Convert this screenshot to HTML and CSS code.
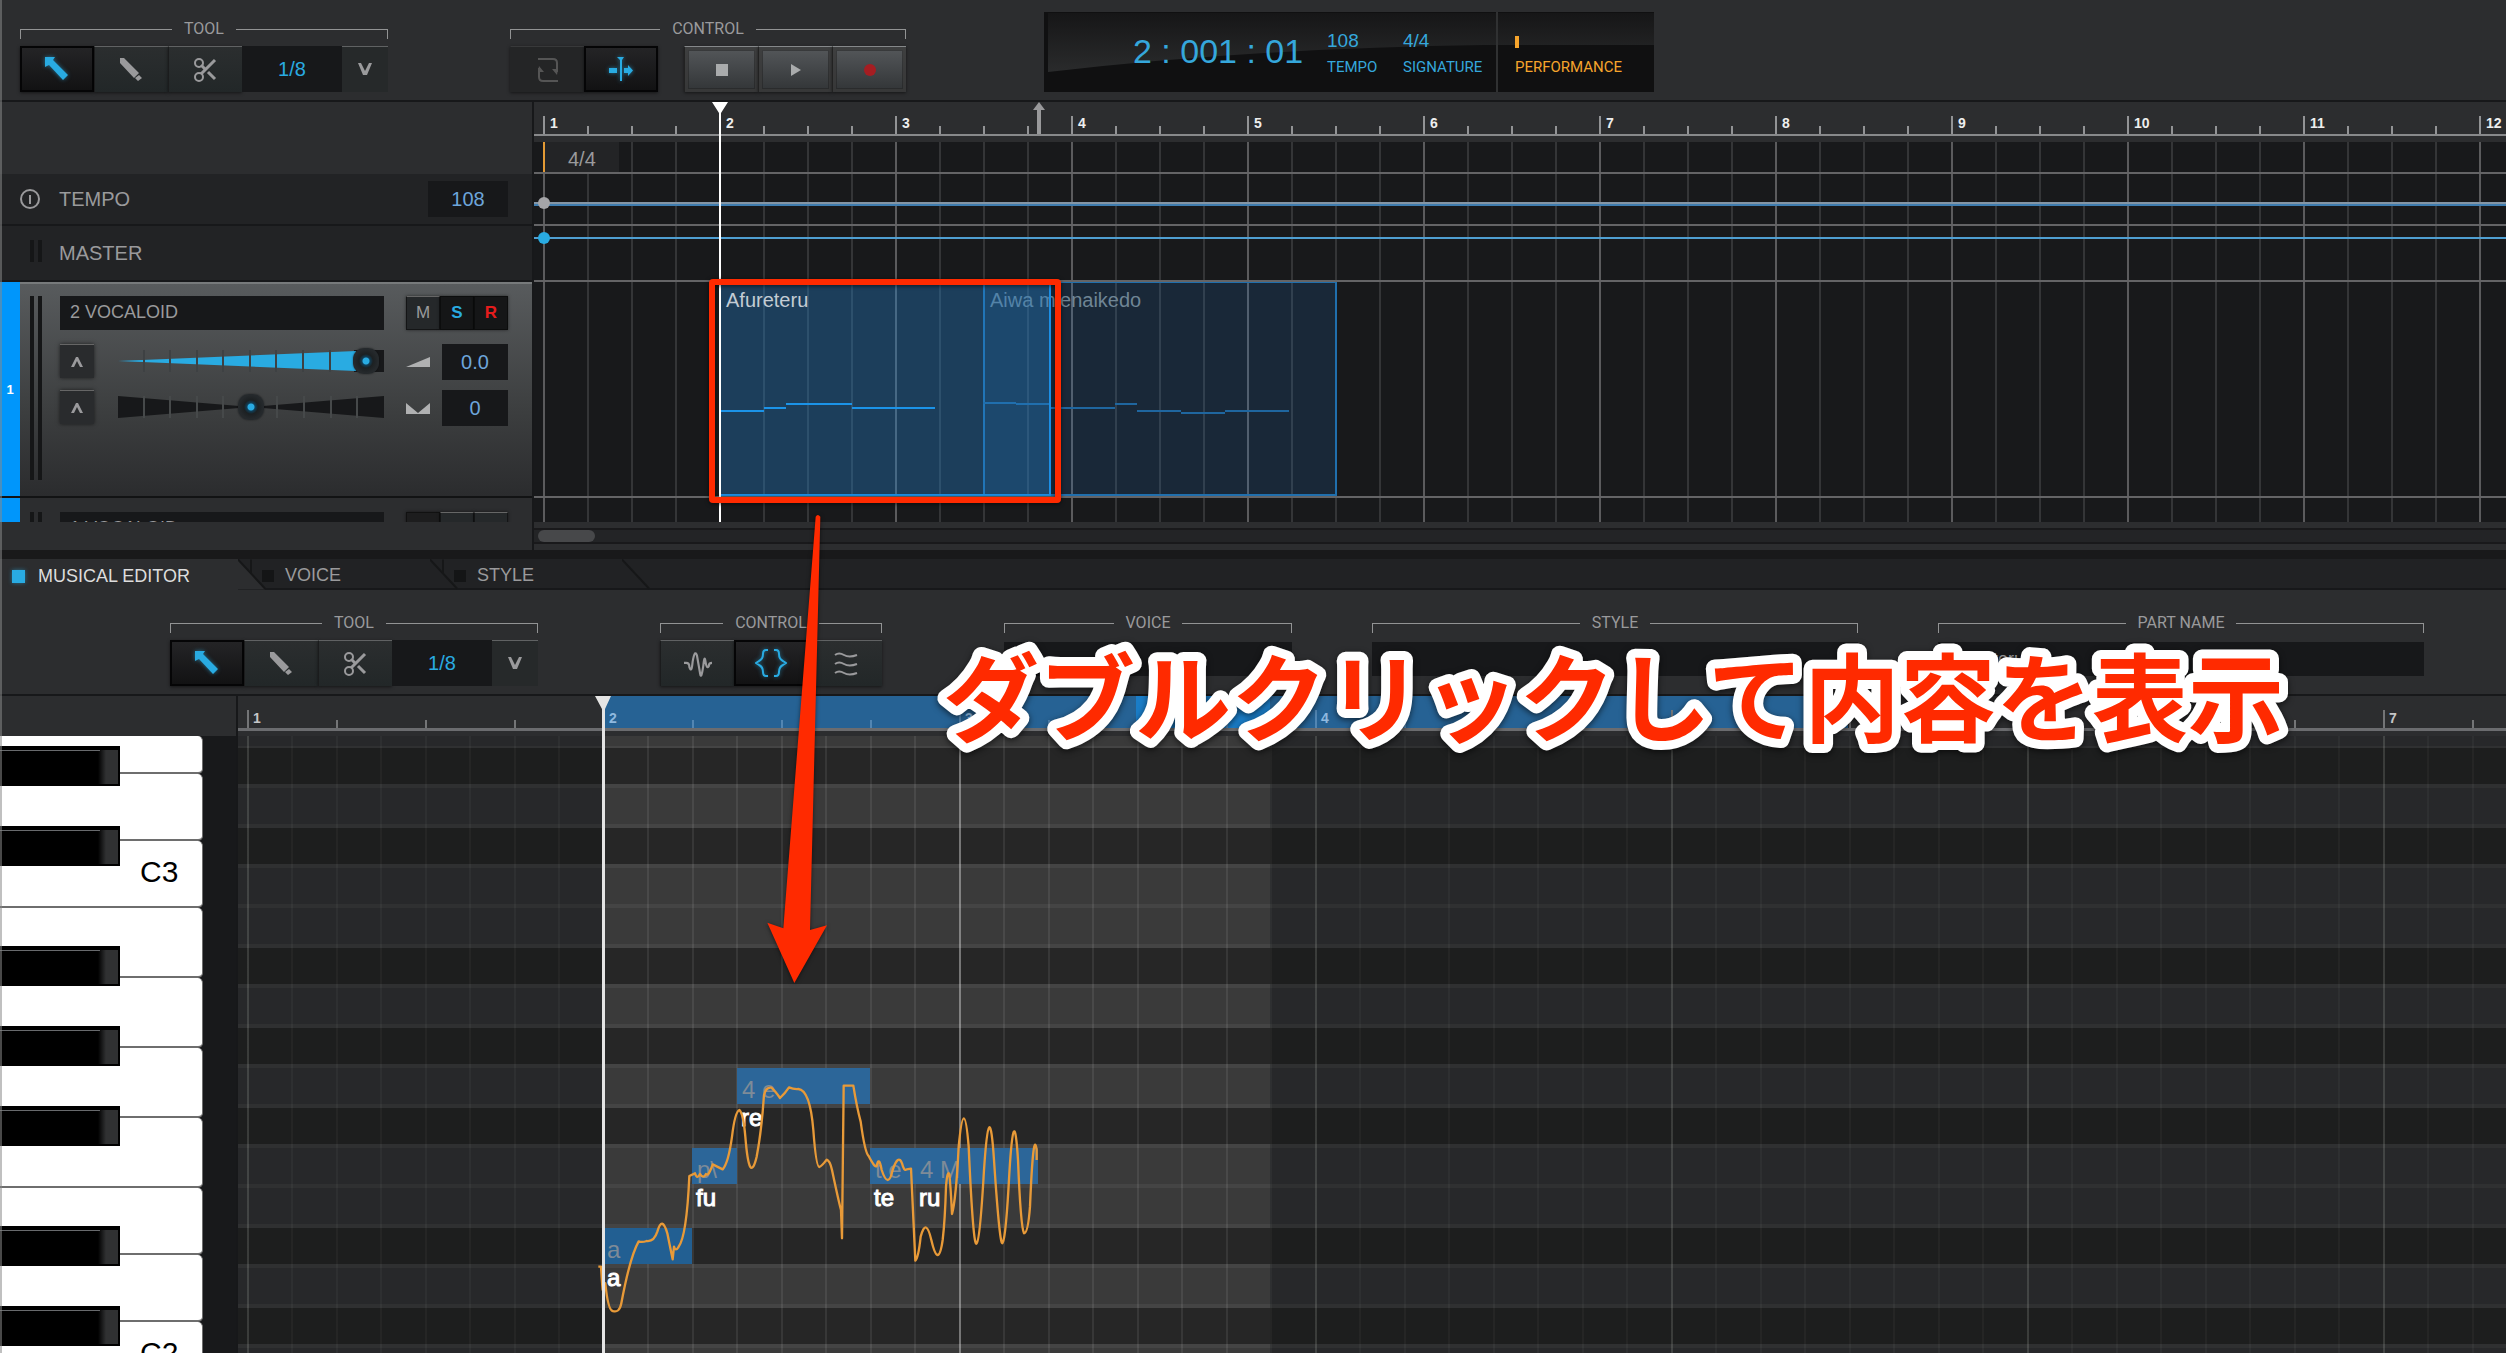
FILE: index.html
```html
<!DOCTYPE html>
<html lang="ja">
<head>
<meta charset="utf-8">
<title>VOCALOID Editor</title>
<link rel="stylesheet" href="styles.css">
</head>
<body>
<svg class="defs" aria-hidden="true">
  <linearGradient id="glare" x1="0" y1="0" x2="0" y2="1"><stop offset="0" stop-color="#161617"/><stop offset="1" stop-color="#2a2b2c"/></linearGradient>
  <symbol id="i-select" viewBox="0 0 24 24"><polygon points="0,0 10,0 8,3 23,18 18,23 4,8 0,10" fill="currentColor"/></symbol>
  <symbol id="i-pencil" viewBox="0 0 24 24"><path d="M0 0H4L19 15 14 20 0 5ZM19 17 22 20 18 23 15 20Z" fill="currentColor"/></symbol>
  <symbol id="i-cut" viewBox="0 0 24 24"><g fill="none" stroke="currentColor" stroke-width="2"><circle cx="5" cy="5" r="4"/><circle cx="5" cy="19" r="4"/><path d="M7 7 11 11M14 14 21 21" stroke-width="3"/><path d="M7 16 21 2" stroke-width="3"/></g></symbol>
  <symbol id="i-loop" viewBox="0 0 24 24"><path d="M2 1H17Q21 1 21 5V14M22 23H7Q3 23 3 19V10" fill="none" stroke="currentColor" stroke-width="2"/><path d="M21 17 16 11H22ZM3 8 8 14H2Z" fill="currentColor"/></symbol>
  <symbol id="i-follow" viewBox="0 0 24 24"><path d="M0 11H8V16H0ZM15 11H19V8L24 13.5 19 19V16H15ZM8 0H15L13 3V24H11V3Z" fill="currentColor"/></symbol>
  <symbol id="i-wave" viewBox="0 0 28 26"><path d="M1 12H3Q6 12 6 16Q8 22 9 11Q11 -1 13 5L16 22Q17 28 19 14Q20 4 21 11Q22 18 24 15Q24 12 27 12" fill="none" stroke="currentColor" stroke-width="2"/></symbol>
  <symbol id="i-brace" viewBox="0 0 32 28"><path d="M13 1H11Q8 1 8 5Q8 10 4 12L1 14 4 16Q8 18 8 23Q8 27 11 27H13M19 1H21Q24 1 24 5Q24 10 28 12L31 14 28 16Q24 18 24 23Q24 27 21 27H19" fill="none" stroke="currentColor" stroke-width="2"/></symbol>
  <symbol id="i-tilde" viewBox="0 0 24 24"><path d="M1 3Q5 0 10 3T23 3M1 12Q5 9 10 12T23 12M1 21Q5 18 10 21T23 21" fill="none" stroke="currentColor" stroke-width="2"/></symbol>
  <symbol id="i-down" viewBox="0 0 14 12"><path d="M0 0H3L7 8 11 0H14L9 12H5Z" fill="currentColor"/></symbol>
  <symbol id="i-up" viewBox="0 0 12 10"><path d="M0 10 5 0H7L12 10H9L6 4 3 10Z" fill="currentColor"/></symbol>
</svg>

<div class="app">
  <header class="transport">
    <div class="group">
      <div class="bracket"><span>TOOL</span></div>
      <div class="buttons">
        <button class="btn on" aria-label="Select"><svg class="icon"><use href="#i-select"/></svg></button>
        <button class="btn" aria-label="Pencil"><svg class="icon"><use href="#i-pencil"/></svg></button>
        <button class="btn" aria-label="Scissors"><svg class="icon"><use href="#i-cut"/></svg></button>
        <div class="quantize"><select aria-label="Quantize"><option>1/8</option></select><svg class="chev"><use href="#i-down"/></svg></div>
      </div>
    </div>
    <div class="group">
      <div class="bracket"><span>CONTROL</span></div>
      <div class="buttons">
        <button class="btn off" aria-label="Loop"><svg class="icon"><use href="#i-loop"/></svg></button>
        <button class="btn on" aria-label="Follow playhead"><svg class="icon"><use href="#i-follow"/></svg></button>
        <div class="deck">
          <button class="btn raised" aria-label="Stop"><i class="stop"></i></button>
          <button class="btn raised" aria-label="Play"><i class="play"></i></button>
          <button class="btn raised" aria-label="Record"><i class="rec"></i></button>
        </div>
      </div>
    </div>
    <div class="lcd">
      <svg class="glare" viewBox="0 0 610 80" preserveAspectRatio="none"><path d="M4 1H610V33H440Q210 36 4 60Z" fill="url(#glare)"/></svg>
      <div class="lcd-main">
        <output class="time">2 : 001 : 01</output>
        <dl><dd>108</dd><dt>TEMPO</dt></dl>
        <dl><dd>4/4</dd><dt>SIGNATURE</dt></dl>
      </div>
      <div class="perf"><i></i><span>PERFORMANCE</span></div>
    </div>
  </header>

  <main class="arrange">
    <div class="heads">
      <div class="head-top"></div>
      <div class="head tempo">
        <svg class="clock" viewBox="0 0 22 22"><circle cx="11" cy="11" r="9"/><path d="M11 7V16"/></svg>
        <label for="tempo">TEMPO</label><input id="tempo" class="value" value="108">
      </div>
      <div class="head master"><i class="meter"></i><span>MASTER</span></div>
      <div class="track">
        <div class="strip">1</div>
        <i class="meter"></i>
        <div class="controls">
          <input class="name" aria-label="Track name" value="2 VOCALOID">
          <div class="msr"><button>M</button><button class="solo">S</button><button class="arm">R</button></div>
          <button class="expand" aria-label="Volume automation"><svg><use href="#i-up"/></svg></button>
          <div class="fader">
            <svg viewBox="0 0 266 22"><path d="M236 0H266V22H236Z" fill="#17181a"/><path d="M0 11 238 1V21Z" fill="#29abe2"/><path d="M26 0V22M52 0V22M79 0V22M105 0V22M132 0V22M158 0V22M185 0V22M212 0V22" stroke="#3e4143" stroke-width="2"/></svg>
            <input type="range" aria-label="Volume" value="98">
          </div>
          <svg class="mark" viewBox="0 0 24 12"><path d="M0 11 24 1V11Z"/></svg>
          <input class="value" aria-label="Volume value" value="0.0">
          <button class="expand" aria-label="Pan automation"><svg><use href="#i-up"/></svg></button>
          <div class="fader">
            <svg viewBox="0 0 266 22"><path d="M0 0 133 11 266 0V22L133 11 0 22Z" fill="#17181a"/><path d="M26 0V22M52 0V22M79 0V22M105 0V22M159 0V22M186 0V22M213 0V22M239 0V22" stroke="#46494a" stroke-width="2"/></svg>
            <input type="range" aria-label="Pan" value="50">
          </div>
          <svg class="mark" viewBox="0 0 24 12"><path d="M0 1 12 11 24 1V12H0Z"/></svg>
          <input class="value" aria-label="Pan value" value="0">
        </div>
      </div>
      <div class="track cut">
        <div class="strip"></div>
        <i class="meter"></i>
        <div class="controls">
          <input class="name" aria-label="Track name" value="1 VOCALOID">
          <div class="msr"><button class="pressed">M</button><button>S</button><button>R</button></div>
        </div>
      </div>
      <div class="head-foot"></div>
    </div>

    <div class="lanes">
      <ol class="ruler"><li>1</li><li>2</li><li>3</li><li>4</li><li>5</li><li>6</li><li>7</li><li>8</li><li>9</li><li>10</li><li>11</li><li>12</li></ol>
      <div class="gutter"></div>
      <div class="grid">
        <div class="lane sig"><span>4/4</span></div>
        <div class="lane l-tempo"><i class="curve wide"></i><i class="dot grey"></i></div>
        <div class="lane l-master"><i class="curve"></i><i class="dot"></i></div>
        <div class="lane l-track">
          <div class="part second"><span>Aiwa mienaikedo</span>
            <svg viewBox="0 0 354 214"><path d="M0 120H33M33 121H67M67 125H132M132 121H154M154 128H198M198 130H242M242 128H306"/></svg></div>
          <div class="part first"><span>Afureteru</span>
            <svg viewBox="0 0 331 214"><path d="M0 128H44M44 125H66M66 121H132M132 125H215"/></svg></div>
        </div>
        <div class="lane l-next"></div>
      </div>
      <div class="scroll"><i></i></div>
      <svg class="marker" viewBox="0 0 12 32"><path d="M6 0 12 8H8V32H4V8H0Z"/></svg>
      <svg class="playhead" viewBox="0 0 16 420"><path d="M0 0H16L9 11V420H7V11Z"/></svg>
    </div>
  </main>

  <nav class="tabs">
    <button class="tab active"><i></i>MUSICAL EDITOR</button><svg class="edge" viewBox="0 0 28 30"><path class="fill" d="M0 0 27 30H0Z"/><path d="M0 0 27 29M13 0V14"/></svg>
    <button class="tab"><i></i>VOICE</button><svg class="edge" viewBox="0 0 28 30"><path d="M0 0 27 29M13 0V14"/></svg>
    <button class="tab"><i></i>STYLE</button><svg class="edge" viewBox="0 0 28 30"><path d="M0 0 27 29"/></svg>
  </nav>

  <section class="editor-bar">
    <div class="group">
      <div class="bracket"><span>TOOL</span></div>
      <div class="buttons">
        <button class="btn on" aria-label="Select"><svg class="icon"><use href="#i-select"/></svg></button>
        <button class="btn" aria-label="Pencil"><svg class="icon"><use href="#i-pencil"/></svg></button>
        <button class="btn" aria-label="Scissors"><svg class="icon"><use href="#i-cut"/></svg></button>
        <div class="quantize"><select aria-label="Quantize"><option>1/8</option></select><svg class="chev"><use href="#i-down"/></svg></div>
      </div>
    </div>
    <div class="group">
      <div class="bracket"><span>CONTROL</span></div>
      <div class="buttons">
        <button class="btn" aria-label="Pitch"><svg class="icon big"><use href="#i-wave"/></svg></button>
        <button class="btn on" aria-label="Notes"><svg class="icon big"><use href="#i-brace"/></svg></button>
        <button class="btn" aria-label="Vibrato"><svg class="icon"><use href="#i-tilde"/></svg></button>
      </div>
    </div>
    <div class="group voice"><div class="bracket"><label for="voice">VOICE</label></div><input id="voice" class="field"></div>
    <div class="group style"><div class="bracket"><label for="style">STYLE</label></div><input id="style" class="field"></div>
    <div class="group part-name"><div class="bracket"><label for="part">PART NAME</label></div><input id="part" class="field" value="Afureteru"></div>
  </section>

  <section class="editor">
    <div class="keys-side">
      <div class="keys-top"></div>
      <div class="piano">
        <ul class="white"><li></li><li class="s"></li><li class="s">C3</li><li></li><li></li><li></li><li></li><li class="s"></li><li class="s"></li><li class="s">C2</li></ul>
        <ul class="black"><li></li><li class="wide"></li><li></li><li></li><li class="wide"></li><li></li><li></li></ul>
      </div>
    </div>
    <div class="roll">
      <ol class="ruler"><li>1</li><li class="lit">2</li><li class="lit">3</li><li class="lit">4</li><li>5</li><li>6</li><li>7</li></ol>
      <div class="gutter"></div>
      <div class="canvas">
        <div class="region">
          <div class="note n1"><b>a</b><span>a</span></div>
          <div class="note n2"><b>p\</b><span>fu</span></div>
          <div class="note n3"><b>4 e</b><span>re</span></div>
          <div class="note n4"><b>t e</b><span>te</span></div>
          <div class="note n5"><b>4 M</b><span>ru</span></div>
        </div>
        <svg class="pitch" viewBox="0 0 1500 999"><path d="M55 740H63Q66 790 68 810Q70 785 76 790Q84 870 98 873Q118 880 124 850Q150 710 176 664Q186 668 200 663Q222 666 232 635Q246 585 262 640Q272 690 278 718L282 680Q286 695 295 682Q320 650 328 468L345 460Q352 480 360 462Q370 478 378 462Q385 472 398 433Q412 440 428 448Q445 430 456 350Q465 275 478 270Q490 280 496 350Q508 500 530 410Q545 330 552 225Q558 200 574 203Q585 212 600 234Q615 220 627 202Q640 208 655 207Q690 210 700 330Q708 440 718 441Q726 438 740 419Q750 422 756 450Q775 540 783 570L786 655L791 197H820Q830 260 842 305Q855 400 866 408Q885 445 890 438Q897 405 905 450Q925 510 938 450Q955 400 966 430Q972 455 980 448L993 446L1006 722Q1015 715 1022 650Q1038 590 1054 660Q1075 750 1088 660Q1095 600 1098 500Q1102 450 1108 462Q1112 500 1116 582Q1128 540 1136 380Q1152 210 1166 380Q1180 690 1190 670Q1200 660 1212 450Q1228 210 1242 420Q1260 690 1268 668Q1278 650 1288 460Q1302 230 1314 420Q1322 620 1332 640Q1344 640 1350 560Q1360 320 1370 390V420"/></svg>
      </div>
      <svg class="playhead" viewBox="0 0 16 660" preserveAspectRatio="xMidYMin slice"><path d="M0 0H16L10 13V660H7V13Z"/></svg>
    </div>
  </section>
</div>

<div class="frame"></div>
<svg class="arrow" viewBox="0 0 1560 1500"><path d="M347 50Q353 40 361 50L330 1290 381 1276 283 1449 202 1268 250 1285Z"/></svg>
<svg class="caption" viewBox="0 0 1400 150"><text x="33" y="104">ダブルクリックして内容を表示</text></svg>
</body>
</html>
```
FILE: styles.css
```css
* { box-sizing: border-box; margin: 0; padding: 0; }
:root {
  --panel: #2c2d2f;
  --dark: #17181a;
  --row: #222325;
  --blue: #29abe2;
  --grey: #9a9a9c;
  --label: Roboto, "Liberation Sans", sans-serif;
}
body {
  position: relative;
  background: var(--panel);
  color: var(--grey);
  font-family: "Liberation Sans", Arial, "Noto Sans CJK JP", sans-serif;
  overflow: hidden;
}
button, input, select { font: inherit; color: inherit; border: 0; border-radius: 0; }
ul, ol { list-style: none; }
.defs { position: absolute; width: 0; height: 0; }
.app { display: flex; flex-direction: column; height: 100vh; overflow: hidden; }
.app::after { content: ""; position: absolute; inset: 0 auto 0 0; width: 2px; background: #8888; }

/* toolbars */
.transport { display: flex; align-items: flex-start; height: 102px; flex: none; padding: 21px 0 0 20px; border-bottom: 2px solid var(--dark); }
.transport .group + .group { margin-left: 122px; }
.bracket { display: flex; align-items: flex-end; gap: 12px; height: 18px; margin-bottom: 7px; font: 16px/20px var(--label); }
.bracket::before, .bracket::after { content: ""; flex: 1; height: 9px; border: 0 solid #929394; border-top-width: 1px; }
.bracket::before { border-left-width: 1px; }
.bracket::after { border-right-width: 1px; }
.buttons { display: flex; height: 46px; }
.btn { display: grid; place-items: center; width: 74px; height: 46px; background: linear-gradient(#2b2e2f, #222728); border-top: 1px solid #606263; border-left: 1px solid #1b1c1d; box-shadow: 0 1px 3px #0008; color: var(--grey); }
.btn.on { background: linear-gradient(#242426, #121213); border: 2px solid #050506; color: var(--blue); }
.btn.off { background: #242526; border-color: #38393a #242526; color: #555; }
.btn.on .icon { filter: drop-shadow(0 0 2px #29abe299); }
.icon { width: 24px; height: 24px; }
.icon.big { width: 32px; height: 28px; }
.quantize { position: relative; width: 146px; }
.quantize select { appearance: none; width: 100%; height: 46px; padding-right: 46px; text-align: center; text-align-last: center; font-size: 20px; color: var(--blue); background: linear-gradient(90deg, var(--dark) 100px, #26292a 100px); }
.quantize::after { content: ""; position: absolute; right: 0; top: 0; width: 46px; height: 1px; background: #606263; }
.chev { position: absolute; right: 16px; top: 17px; width: 14px; height: 12px; pointer-events: none; }
.deck { display: flex; margin-left: 26px; }
.raised { background: linear-gradient(#55585b, #313436); border-color: #85888a #222; box-shadow: 0 1px 3px #0008, inset 0 0 0 3px #4448, inset 0 0 0 4px #2228; }
.stop { width: 12px; height: 12px; background: #a9abac; }
.play { border: solid transparent; border-width: 6px 0 6px 10px; border-left-color: #a9abac; }
.rec { width: 12px; height: 12px; border-radius: 50%; background: #a51d22; }

.lcd { position: relative; display: flex; width: 610px; height: 80px; margin: -9px 0 0 138px; background: #101011; color: #35a7dc; }
.lcd-main { position: relative; display: flex; width: 452px; padding-left: 89px; }
.glare { position: absolute; left: 0; top: 0; width: 610px; height: 80px; }
.time { width: 194px; font-size: 34px; line-height: 78px; white-space: pre; }
.lcd dl { display: flex; flex-direction: column; gap: 3px; width: 76px; padding-top: 18px; font: 15px/24px var(--label); }
.lcd dd { font: 19px/22px "Liberation Sans", sans-serif; }
.perf { position: relative; padding: 24px 0 0 17px; border-left: 2px solid #303132; color: #f6a42c; font: 15px/24px var(--label); }
.perf i { display: block; width: 4px; height: 12px; margin-bottom: 7px; background: #f6a42c; }

/* arrangement */
.arrange { display: grid; grid-template-columns: 532px 1fr; flex: none; background: var(--panel); }
.head-top { height: 72px; }
.head { display: flex; align-items: center; background: var(--row); border-bottom: 2px solid var(--dark); font-size: 20px; }
.head.tempo { height: 52px; padding: 0 24px 0 19px; }
.clock { width: 22px; height: 22px; margin-right: 18px; fill: none; stroke: var(--grey); stroke-width: 2; }
.tempo label { flex: 1; }
.value { height: 36px; width: 66px; text-align: center; font-size: 20px; background: var(--dark); color: #6da5da; }
.tempo .value { width: 80px; }
.head.master { height: 56px; padding-left: 30px; }
.meter { flex: none; width: 12px; border: solid #151617; border-width: 0 4px; }
.master .meter { height: 22px; margin: 0 17px 4px 0; }
.track { display: flex; height: 216px; border-bottom: 2px solid #121314; background: linear-gradient(#777a7b 2px, #585b5d 2px, #3c3e3f 130px, #2b2c2e 100%); }
.strip { display: grid; place-items: center; width: 20px; background: #0096fb; color: #fff; font-size: 13px; font-weight: bold; }
.track .meter { margin: 14px 18px 16px 10px; }
.controls { display: grid; grid-template-columns: 58px 266px 22px 36px 66px; grid-template-rows: 48px 46px 36px; padding-top: 14px; align-content: start; align-items: start; }
.name { grid-column: 1 / 3; width: 324px; height: 34px; padding: 0 10px 2px; background: var(--dark); font-size: 18px; }
.msr { grid-column: 4 / 6; display: flex; height: 34px; }
.msr button { width: 34px; background: #25282a; border: 1px solid #141516; border-top-color: #666; font-size: 17px; box-shadow: 0 0 3px #0008; }
.msr .solo, .msr .arm { background: #151617; border-color: #0c0d0d; font-weight: bold; }
.msr .solo { color: var(--blue); }
.msr .arm { color: #e51c1c; }
.msr .pressed { background: #1d1d1e; border-color: #111; }
.expand { display: grid; place-items: center; width: 34px; height: 34px; background: #292b2d; border-top: 1px solid #666; box-shadow: 0 0 4px #0009; }
.expand svg { width: 12px; height: 10px; }
.fader { display: grid; align-items: center; height: 34px; }
.fader > * { grid-area: 1 / 1; width: 266px; height: 22px; }
.fader input { appearance: none; background: none; }
.fader input::-webkit-slider-thumb { appearance: none; width: 26px; height: 26px; border-radius: 11px; background: radial-gradient(circle, var(--blue) 3px, #10405a 4px, #1c2022 7px, #25292c 12px); box-shadow: 0 0 2px #0008; }
.mark { grid-column: 4; width: 24px; height: 12px; margin-top: 12px; fill: #b0b1b2; }
.track.cut { height: 24px; border: 0; background: var(--panel); overflow: hidden; }
.cut .meter { margin-bottom: 0; }

.lanes { position: relative; min-width: 0; overflow: hidden; border-left: 2px solid var(--dark); }
.ruler { display: flex; height: 34px; padding-left: 9px; border-bottom: 2px solid #88898b; color: #eee; font-size: 14px; font-weight: bold; overflow: hidden; }
.ruler li { flex: none; width: 176px; padding: 13px 0 0 7px; line-height: 16px; background:
  linear-gradient(#929395, #929395) 0 100% / 2px 18px no-repeat,
  repeating-linear-gradient(90deg, #929395 0 2px, transparent 2px 44px) 0 100% / 100% 8px no-repeat; }
.gutter { height: 6px; }
.grid { background:
  repeating-linear-gradient(90deg, #5b5b5d 0 2px, transparent 2px 176px) 9px 0,
  repeating-linear-gradient(90deg, #343537 0 2px, transparent 2px 44px) 9px 0,
  #18191b; }
.lane { position: relative; border-bottom: 2px solid #646466; }
.sig { height: 32px; padding-left: 9px; }
.sig span { display: block; width: 76px; height: 30px; padding-left: 23px; line-height: 34px; font-size: 20px; background: #232426; border-left: 2px solid #e39a35; }
.l-tempo { height: 52px; }
.l-master { height: 56px; }
.l-track { height: 216px; }
.l-next { height: 24px; border: 0; }
.curve { position: absolute; left: 0; right: 0; top: 11px; height: 2px; background: #4f9fd2; }
.curve.wide { top: 28px; height: 4px; background: linear-gradient(#8496a6 2px, #3f7db0 2px); }
.dot { position: absolute; left: 4px; top: 6px; width: 12px; height: 12px; border-radius: 50%; background: var(--blue); }
.dot.grey { top: 23px; background: #a5a5a8; }
.part { position: absolute; top: 0; height: 214px; padding: 5px 5px; border: 2px solid; border-top-width: 1px; font-size: 20px; line-height: 24px; }
.part svg { position: absolute; top: 0; height: 214px; fill: none; stroke-width: 2; }
.part.first { left: 185px; width: 332px; background: #2280c85e; border-color: #1b8fe6; border-left: 0; color: #c3ccd4; padding-left: 7px; }
.part.second { left: 449px; width: 354px; background: #2278c82b; border-color: #206fad; color: #6f8595; }
.first svg { left: 1px; width: 331px; stroke: #1b93e8; }
.second svg { left: -2px; width: 354px; stroke: #1f669f; }
.scroll { height: 16px; margin: 6px 0; border: solid #19191b; border-width: 2px 0; background: #232426; }
.scroll i { display: block; width: 57px; height: 12px; margin-left: 4px; border-radius: 6px; background: #47484a; }
.marker { position: absolute; left: 499px; top: 0; width: 12px; height: 32px; fill: #99999b; }
.playhead { position: absolute; top: 0; width: 16px; fill: #fff; }
.lanes .playhead { left: 178px; height: 420px; }

/* tabs */
.tabs { display: flex; flex: none; height: 40px; padding-top: 9px; background: linear-gradient(#19191a 9px, #212224 9px); border-bottom: 2px solid var(--dark); }
.tab { display: flex; align-items: center; gap: 11px; width: 168px; padding-top: 4px; background: none; font-size: 18px; margin-left: -4px; white-space: nowrap; }
.tab i { width: 12px; height: 12px; background: #141516; }
.tab.active { gap: 13px; width: 238px; height: 31px; margin: 0; padding-left: 12px; background: var(--panel); color: #ddd; }
.tab.active i { width: 13px; height: 13px; background: var(--blue); box-shadow: 0 0 4px #29abe288; }
.edge { width: 28px; height: 31px; fill: none; stroke: #161718; stroke-width: 2; }
.edge .fill { fill: var(--panel); stroke: none; }

/* editor toolbar */
.editor-bar { display: flex; flex: none; height: 106px; padding: 25px 82px 0 170px; border-bottom: 2px solid var(--dark); }
.editor-bar .group { flex: none; }
.editor-bar .group:nth-child(2) { margin: 0 122px; }
.editor-bar .voice { width: 288px; margin-right: 80px; }
.editor-bar .style { flex: 1; margin-right: 80px; }
.editor-bar .part-name { flex: 1; }
.field { display: block; width: 100%; height: 34px; margin-top: 9px; padding: 0 12px; background: var(--dark); font-size: 18px; }

/* piano roll */
.editor { display: grid; grid-template-columns: 236px 1fr; flex: 1; min-height: 0; }
.keys-side, .roll { display: flex; flex-direction: column; min-width: 0; min-height: 0; }
.keys-top { flex: none; height: 40px; }
.piano { position: relative; flex: 1; overflow: hidden; background: #18191b; color: #000; font-size: 30px; }
.white { width: 203px; }
.white li { display: grid; align-items: center; height: 70px; padding: 0 0 4px 140px; background: #fff; border: solid #6e6e6e; border-width: 0 1px 2px 0; border-radius: 0 5px 5px 0; }
.white .s { height: 67px; }
.white li:first-child { height: 38px; }
.black { position: absolute; left: 0; top: 10px; display: grid; gap: 40px; }
.black li { width: 120px; height: 40px; border: solid #000; border-width: 4px 2px 2px 0; background: linear-gradient(#686a6d 0 1px, transparent 1px) 0 0 / 100px 100% no-repeat, linear-gradient(90deg, #000 98px, #303132 106px); }
.black .wide { margin-bottom: 40px; }

.roll { position: relative; overflow: hidden; border-left: 2px solid var(--dark); }
.roll .ruler { flex: none; height: 35px; border-bottom: 3px solid #6b6c6f; color: #c5c5c7; }
.roll .ruler li { width: 356px; padding: 14px 0 0 6px; background:
  linear-gradient(#747577, #747577) 0 100% / 2px 18px no-repeat,
  repeating-linear-gradient(90deg, #747577 0 2px, transparent 2px 89px) 0 100% / 100% 8px no-repeat; }
.roll .ruler { background: linear-gradient(#1a7dc8, #1a7dc8) 898px 0 / 134px 100% no-repeat, linear-gradient(#266294, #266294) 365px 0 / 1245px 100% no-repeat; }
.roll .ruler .lit { color: #8fb9df; background:
  linear-gradient(#5286b3, #5286b3) 0 100% / 2px 18px no-repeat,
  repeating-linear-gradient(90deg, #5286b3 0 2px, transparent 2px 89px) 0 100% / 100% 8px no-repeat; }
.roll .gutter { flex: none; height: 5px; }
.canvas, .region {
  --b: #1d1e1e; --w: #27282a; --l: #2f3031; --v: #b0b8b00d; --bar: #b0b8b028;
  background:
    repeating-linear-gradient(90deg, var(--bar) 0 2px, transparent 2px 356px) 9px 0,
    repeating-linear-gradient(90deg, var(--v) 0 2px, transparent 2px 44px, var(--v) 44px 46px, transparent 46px 89px) 9px 0,
    repeating-linear-gradient(var(--l) 0 2px, transparent 2px 38px, var(--l) 38px 40px) 0 10px,
    repeating-linear-gradient(var(--b) 0 40px, var(--w) 40px 80px, var(--b) 80px 120px, var(--w) 120px 200px, var(--b) 200px 240px, var(--w) 240px 280px, var(--b) 280px 320px, var(--w) 320px 360px, var(--b) 360px 400px, var(--w) 400px 480px) 0 10px / 100% 480px;
}
.canvas { position: relative; flex: 1; }
.region { position: absolute; left: 365px; top: 0; bottom: 0; width: 667px; --b: #262626; --w: #3a3a3a; --l: #444; --v: #ffffff14; --bar: #ffffff50; background-position: 0 0, 0 0, 0 10px, 0 10px; }
.note { position: absolute; height: 36px; background: #2c6699; font-size: 24px; line-height: 24px; white-space: nowrap; }
.note b { display: block; padding: 10px 0 4px 5px; color: #7e8b98; font-weight: normal; }
.note span { display: block; padding-left: 4px; color: #fff; -webkit-text-stroke: 1px #fff; }
.n1 { left: 2px; top: 492px; width: 87px; background: #225f92; }
.n1 b, .n1 span { padding-left: 2px; }
.n2 { left: 89px; top: 412px; width: 45px; }
.n3 { left: 134px; top: 332px; width: 133px; }
.n4 { left: 267px; top: 412px; width: 45px; }
.n5 { left: 312px; top: 412px; width: 123px; }
.pitch { position: absolute; left: 342px; top: 284px; width: 500px; height: 333px; fill: none; stroke: #e89a38; stroke-width: 7; stroke-linejoin: round; }
.roll .playhead { left: 357px; height: 100%; fill: #e4e4e4; }

/* annotations */
.frame { position: absolute; left: 709px; top: 279px; width: 352px; height: 224px; border: 6px solid #ff2a00; border-radius: 4px; box-shadow: 0 1px 4px #0009, inset 0 1px 4px #0009; pointer-events: none; }
.arrow { position: absolute; left: 700px; top: 500px; width: 520px; height: 500px; fill: #ff2a00; filter: drop-shadow(0 1px 2px #0008); pointer-events: none; }
.caption { position: absolute; left: 910px; top: 630px; width: 1400px; height: 150px; filter: drop-shadow(0 2px 3px #0009); pointer-events: none; }
.caption text { font: bold 96px "Noto Sans CJK JP", sans-serif; fill: #ff2a00; stroke: #fff; stroke-width: 18px; stroke-linejoin: round; paint-order: stroke; }
```
